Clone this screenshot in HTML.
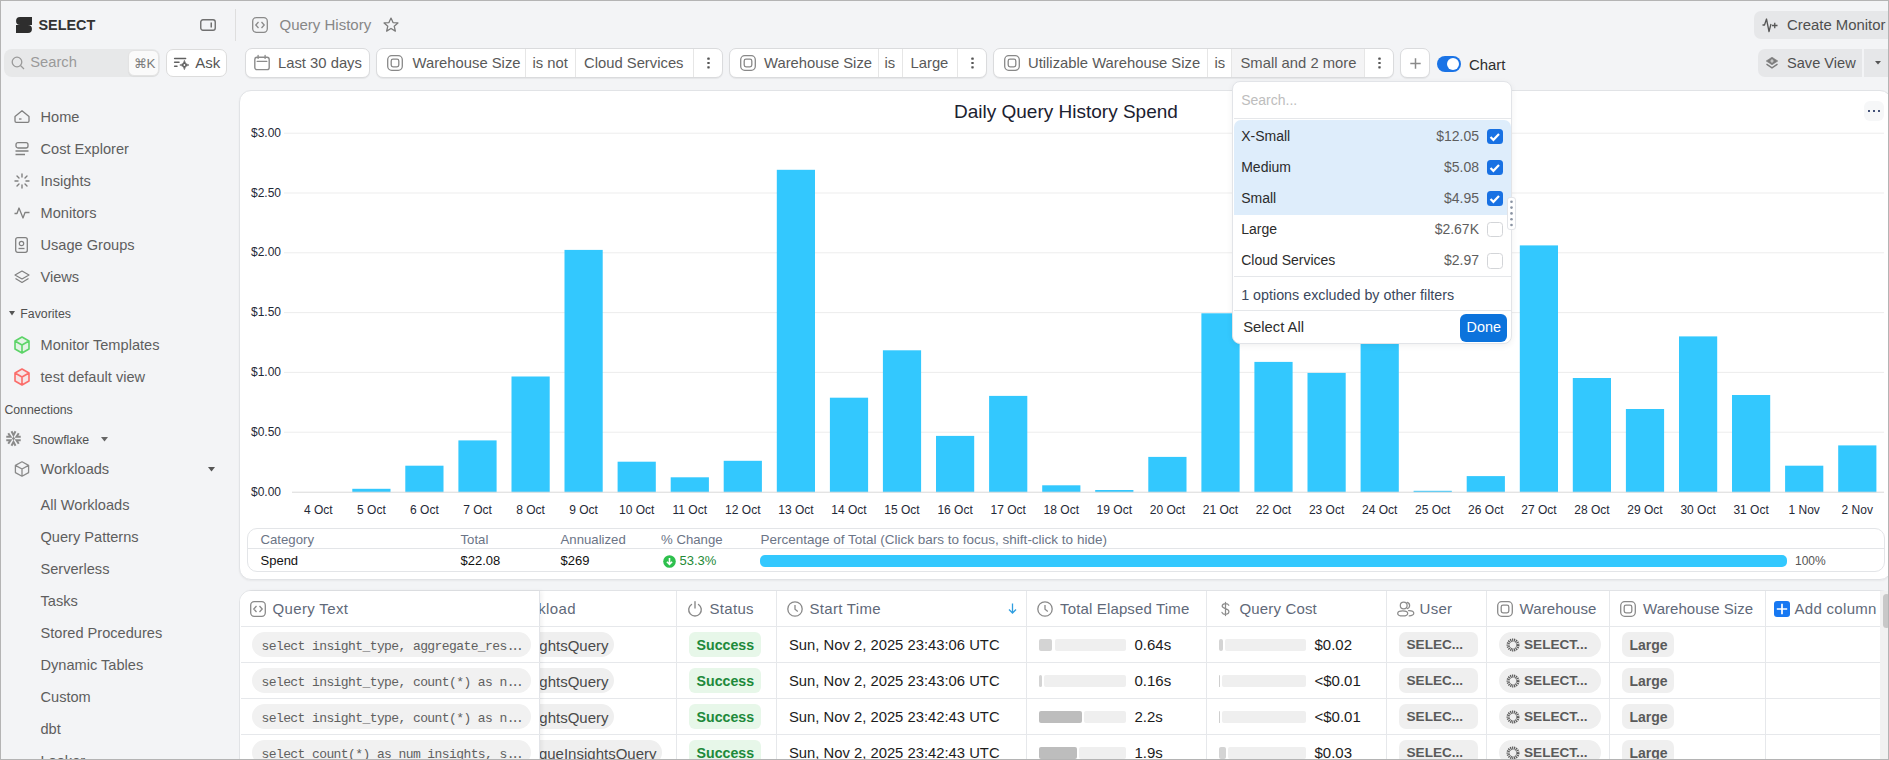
<!DOCTYPE html>
<html><head><meta charset="utf-8">
<style>
*{box-sizing:border-box;margin:0;padding:0}
html,body{width:1889px;height:760px;overflow:hidden;background:#f3f4f6;font-family:"Liberation Sans",sans-serif;color:#333}
.a{position:absolute}
.frame{position:absolute;left:0;top:0;width:1889px;height:760px;border:1px solid #b4b4b4;z-index:100;pointer-events:none}
.t{position:absolute;white-space:nowrap;line-height:1}
svg.ic{position:absolute;overflow:visible}
.side{color:#5e5e5e;font-size:14.6px}
.chip{position:absolute;top:48px;height:30px;background:#fff;border:1px solid #dadbdd;border-radius:7px;box-shadow:0 1px 1px rgba(0,0,0,0.06)}
.sep{position:absolute;top:0;bottom:0;width:1px;background:#e6e6e6}
.ct{position:absolute;top:6.7px;font-size:14.8px;color:#595959;white-space:nowrap;line-height:1}
.chart{position:absolute;left:0;top:0;z-index:3}
.card{position:absolute;background:#fff;border:1px solid #e1e3e6;border-radius:12px}
.hd{color:#5f6979;font-size:15px}
.row{position:absolute;left:240px;width:1648px;height:1px;background:#e6e8eb;z-index:6}
.col{position:absolute;width:1px;background:#e6e8eb;z-index:6}
.pill{position:absolute;height:24.5px;border-radius:7px;background:#efefef;z-index:6}
.code{position:absolute;left:252px;width:279px;height:24.5px;border-radius:13px;background:#f1f1f1;font-family:"Liberation Mono",monospace;font-size:13px;letter-spacing:-0.59px;color:#606060;padding:7.5px 0 0 9.5px;white-space:nowrap;line-height:1;z-index:8}
.wl{position:absolute;height:24.5px;border-radius:13px;background:#efefef;font-size:15px;color:#4a4a4a;white-space:nowrap;line-height:1;z-index:6;text-align:right;padding:6px 5.5px 0 0}
.succ{position:absolute;left:689px;width:72px;height:25px;border-radius:6px;background:#e7f7e9;color:#20893a;font-weight:bold;font-size:14.2px;padding:6px 0 0 7.5px;z-index:6;line-height:1}
.date{position:absolute;left:789px;font-size:14.8px;color:#1c1c1c;white-space:nowrap;line-height:1;z-index:6}
.bar{position:absolute;height:12px;border-radius:2px;z-index:6}
.val{position:absolute;font-size:15px;color:#1c1c1c;line-height:1;z-index:6;white-space:nowrap}
.usr{position:absolute;left:1399px;width:79px;height:24.5px;border-radius:7px;background:#efefef;color:#5a5a5a;font-weight:bold;font-size:13.6px;padding:6px 0 0 7.5px;z-index:6;line-height:1}
.wh{position:absolute;left:1499px;width:102px;height:24.5px;border-radius:13px;background:#efefef;color:#5a5a5a;font-weight:bold;font-size:13.6px;padding:6px 0 0 25px;z-index:6;line-height:1}
.lg{position:absolute;left:1622px;width:52px;height:24.5px;border-radius:7px;background:#efefef;color:#5a5a5a;font-weight:bold;font-size:14px;padding:6px 0 0 7.5px;z-index:6;line-height:1}
.pop{position:absolute;left:1232px;top:81px;width:280px;height:263px;background:#fff;border:1px solid #e2e4e8;border-radius:8px;z-index:20;box-shadow:0 2px 6px rgba(0,0,0,0.06)}
.pt{position:absolute;font-size:14px;color:#2b2b2b;white-space:nowrap;line-height:1}
.pv{position:absolute;right:32px;font-size:14px;color:#5e5e5e;white-space:nowrap;line-height:1;text-align:right}
.cb{position:absolute;left:253px;width:15.5px;height:15.5px;border-radius:3.5px}
.cb.on{background:#1871e3}
.cb.off{border:1px solid #d3d5d8;background:#fff}
</style></head><body>
<div class="frame"></div>

<!-- ===== SIDEBAR ===== -->
<svg class="ic" style="left:16px;top:17px" width="16" height="16" viewBox="0 0 16 16"><path d="M4 0H16V7.9H4A3.95 3.95 0 0 1 4 0Z" fill="#2e2e2e"/><path d="M0 8.1H12A3.95 3.95 0 0 1 12 16H0Z" fill="#2e2e2e"/></svg>
<div class="t" style="left:38.5px;top:17.6px;font-size:14.4px;font-weight:bold;color:#333;letter-spacing:0px">SELECT</div>
<svg class="ic" style="left:200px;top:19px" width="16" height="12" viewBox="0 0 16 12"><rect x="0.75" y="0.75" width="14.5" height="10.5" rx="2.2" fill="none" stroke="#707070" stroke-width="1.4"/><rect x="10.5" y="3.5" width="1.5" height="5" fill="#707070"/></svg>
<div class="a" style="left:235px;top:9px;width:1px;height:32px;background:#dedede"></div>

<!-- search -->
<div class="a" style="left:4px;top:49px;width:156px;height:28px;border-radius:8px;background:#e7e8e9"></div>
<svg class="ic" style="left:11px;top:56px" width="14" height="14" viewBox="0 0 14 14"><circle cx="6" cy="6" r="4.8" fill="none" stroke="#9a9a9a" stroke-width="1.3"/><path d="M9.5 9.5L13 13" stroke="#9a9a9a" stroke-width="1.3"/></svg>
<div class="t" style="left:30.3px;top:55px;font-size:14.7px;color:#9a9a9a">Search</div>
<div class="a" style="left:128px;top:50px;width:31px;height:26px;border-radius:6px;background:#fafafa;border:1px solid #e3e3e3;box-shadow:0 1px 1px rgba(0,0,0,0.05)"></div>
<div class="t" style="left:133.5px;top:56.8px;font-size:13.4px;color:#7a7a7a">&#8984;K</div>
<div class="a" style="left:166px;top:49px;width:61px;height:28px;border-radius:7px;background:#fff;border:1px solid #dcdcdc"></div>
<svg class="ic" style="left:173px;top:56px" width="17" height="15" viewBox="0 0 17 15"><path d="M1.6 2.4H12.6M1.6 6.3H6M1.6 10.2H4" stroke="#606060" stroke-width="1.5" stroke-linecap="round"/><path d="M11.4 4.3Q11.9 8.5 16 9Q11.9 9.5 11.4 13.7Q10.9 9.5 6.8 9Q10.9 8.5 11.4 4.3Z" fill="#606060" stroke="#606060" stroke-width="0.6" stroke-linejoin="round"/><circle cx="11.4" cy="9" r="0.9" fill="#fff"/></svg>
<div class="t" style="left:195.3px;top:55.1px;font-size:15px;color:#555">Ask</div>

<!-- nav -->
<svg class="ic" style="left:14px;top:110px" width="16" height="13" viewBox="0 0 16 13"><path d="M1 6.5L8 0.8L15 6.5V11A1.3 1.3 0 0 1 13.7 12.3H2.3A1.3 1.3 0 0 1 1 11Z" fill="none" stroke="#808080" stroke-width="1.3" stroke-linejoin="round"/><path d="M5 9H7.5" stroke="#808080" stroke-width="1.3"/></svg>
<div class="t side" style="left:40.5px;top:109.7px">Home</div>
<svg class="ic" style="left:15px;top:142px" width="14" height="14" viewBox="0 0 14 14"><rect x="1" y="0.7" width="12" height="5.3" rx="2" fill="none" stroke="#808080" stroke-width="1.3"/><path d="M0.5 9H13.5M0.5 12.5H10" stroke="#808080" stroke-width="1.3"/></svg>
<div class="t side" style="left:40.5px;top:141.7px">Cost Explorer</div>
<svg class="ic" style="left:14px;top:173px" width="16" height="16" viewBox="0 0 16 16"><g stroke="#808080" stroke-width="1.4" stroke-linecap="round"><path d="M8 1V4M8 12V15M1 8H4M12 8H15M3 3L5 5M11 11L13 13M13 3L11 5M5 11L3 13"/></g></svg>
<div class="t side" style="left:40.5px;top:173.7px">Insights</div>
<svg class="ic" style="left:14px;top:206px" width="16" height="14" viewBox="0 0 16 14"><path d="M0.5 7.5H3L5 2L9 12L11 6.5H15.5" fill="none" stroke="#808080" stroke-width="1.3" stroke-linejoin="round"/></svg>
<div class="t side" style="left:40.5px;top:205.7px">Monitors</div>
<svg class="ic" style="left:15px;top:237px" width="13" height="16" viewBox="0 0 13 16"><rect x="0.7" y="0.7" width="11.6" height="14.6" rx="2" fill="none" stroke="#808080" stroke-width="1.3"/><circle cx="6.5" cy="6.5" r="2.2" fill="none" stroke="#808080" stroke-width="1.2"/><path d="M3.5 11.5H9.5" stroke="#808080" stroke-width="1.3"/></svg>
<div class="t side" style="left:40.5px;top:237.7px">Usage Groups</div>
<svg class="ic" style="left:14px;top:270px" width="16" height="15" viewBox="0 0 16 15"><path d="M8 1L15 5L8 9L1 5Z" fill="none" stroke="#808080" stroke-width="1.2" stroke-linejoin="round"/><path d="M1.5 8.5L8 12.5L14.5 8.5" fill="none" stroke="#808080" stroke-width="1.2" stroke-linejoin="round"/></svg>
<div class="t side" style="left:40.5px;top:269.7px">Views</div>

<svg class="ic" style="left:9px;top:311px" width="6" height="5" viewBox="0 0 6 5"><path d="M0 0H6L3 4.5Z" fill="#555"/></svg>
<div class="t" style="left:20.3px;top:308.2px;font-size:12.3px;color:#505050">Favorites</div>
<svg class="ic" style="left:14px;top:336px" width="16" height="18" viewBox="0 0 16 18"><path d="M8 1L15 5V13L8 17L1 13V5Z" fill="#e3f3e5"/><path d="M8 1L15 5V13L8 17L1 13V5Z M1 5L8 9L15 5 M8 9V17" fill="none" stroke="#5cd468" stroke-width="1.6" stroke-linejoin="round"/></svg>
<div class="t side" style="left:40.5px;top:337.7px">Monitor Templates</div>
<svg class="ic" style="left:14px;top:368px" width="16" height="18" viewBox="0 0 16 18"><path d="M8 1L15 5V13L8 17L1 13V5Z" fill="#f6e6e7"/><path d="M8 1L15 5V13L8 17L1 13V5Z M1 5L8 9L15 5 M8 9V17" fill="none" stroke="#fb6d6a" stroke-width="1.6" stroke-linejoin="round"/></svg>
<div class="t side" style="left:40.5px;top:369.7px">test default view</div>
<div class="t" style="left:4.4px;top:404.4px;font-size:12.3px;color:#505050">Connections</div>
<svg class="ic" style="left:6px;top:431px" width="15" height="15" viewBox="0 0 15 15"><path d="M9.50 0.30L7.50 4.10L5.50 0.30M2.26 2.17L4.56 5.80L0.26 5.63M0.26 9.37L4.56 9.20L2.26 12.83M5.50 14.70L7.50 10.90L9.50 14.70M12.74 12.83L10.44 9.20L14.74 9.37M14.74 5.63L10.44 5.80L12.74 2.17" fill="none" stroke="#8a8a8a" stroke-width="2"/><rect x="6.3" y="6.3" width="2.4" height="2.4" transform="rotate(45 7.5 7.5)" fill="#8a8a8a"/></svg>
<div class="t" style="left:32.4px;top:434.2px;font-size:12.3px;color:#505050">Snowflake</div>
<svg class="ic" style="left:101px;top:437px" width="7" height="5" viewBox="0 0 7 5"><path d="M0 0H7L3.5 4.5Z" fill="#666"/></svg>
<svg class="ic" style="left:14px;top:461px" width="16" height="16" viewBox="0 0 16 16"><path d="M8 0.8L14.6 4.4V11.6L8 15.2L1.4 11.6V4.4Z M1.4 4.4L8 8L14.6 4.4 M8 8V15.2" fill="none" stroke="#8a8a8a" stroke-width="1.3" stroke-linejoin="round"/></svg>
<div class="t side" style="left:40.5px;top:461.7px">Workloads</div>
<svg class="ic" style="left:208px;top:467px" width="7" height="5" viewBox="0 0 7 5"><path d="M0 0H7L3.5 4.5Z" fill="#555"/></svg>
<div class="t side" style="left:40.5px;top:497.7px">All Workloads</div>
<div class="t side" style="left:40.5px;top:529.7px">Query Patterns</div>
<div class="t side" style="left:40.5px;top:561.7px">Serverless</div>
<div class="t side" style="left:40.5px;top:593.7px">Tasks</div>
<div class="t side" style="left:40.5px;top:625.7px">Stored Procedures</div>
<div class="t side" style="left:40.5px;top:657.7px">Dynamic Tables</div>
<div class="t side" style="left:40.5px;top:689.7px">Custom</div>
<div class="t side" style="left:40.5px;top:721.7px">dbt</div>
<div class="t side" style="left:40.5px;top:753.7px">Looker</div>

<!-- ===== HEADER ===== -->
<svg class="ic" style="left:252px;top:16.5px" width="16" height="16" viewBox="0 0 16 16"><rect x="0.7" y="0.7" width="14.6" height="14.6" rx="3.5" fill="none" stroke="#8a8a8a" stroke-width="1.3"/><path d="M6.5 5L3.8 8L6.5 11M9.5 5L12.2 8L9.5 11" fill="none" stroke="#8a8a8a" stroke-width="1.3"/></svg>
<div class="t" style="left:279.5px;top:17px;font-size:15px;color:#878787">Query History</div>
<svg class="ic" style="left:382.5px;top:17px" width="16" height="16" viewBox="0 0 15 15"><path d="M7.5 1L9.4 5.2L14 5.6L10.5 8.6L11.6 13.2L7.5 10.8L3.4 13.2L4.5 8.6L1 5.6L5.6 5.2Z" fill="none" stroke="#7a7a7a" stroke-width="1.2" stroke-linejoin="round"/></svg>

<div class="a" style="left:1754px;top:11px;width:150px;height:28px;border-radius:7px;background:#e6e7e9"></div>
<svg class="ic" style="left:1762px;top:18px" width="16" height="15" viewBox="0 0 16 15"><path d="M0.5 7H2.5L4.5 1L7 13.5L9 6" fill="none" stroke="#555" stroke-width="1.3" stroke-linejoin="round"/><path d="M10 7.5H15.5M12.75 4.75V10.25" stroke="#555" stroke-width="1.3"/></svg>
<div class="t" style="left:1787px;top:18.4px;font-size:14.9px;color:#4f4f4f">Create Monitor</div>

<div class="a" style="left:1758px;top:49px;width:104px;height:28px;border-radius:7px 0 0 7px;background:#e6e7e9"></div>
<div class="a" style="left:1864px;top:49px;width:40px;height:28px;background:#e6e7e9"></div>
<svg class="ic" style="left:1766px;top:57px" width="12" height="12" viewBox="0 0 12 12"><path d="M6 0.2L11.8 4L6 7.8L0.2 4Z" fill="#7c7c7c" stroke="#7c7c7c" stroke-width="0.6" stroke-linejoin="round"/><path d="M0.5 7.2L6 10.8L11.5 7.2" fill="none" stroke="#7c7c7c" stroke-width="1.4"/><path d="M6 2.3V5.7M4.3 4H7.7" stroke="#d8d8d8" stroke-width="1.2"/></svg>
<div class="t" style="left:1787px;top:56.3px;font-size:14.6px;color:#4f4f4f">Save View</div>
<svg class="ic" style="left:1875px;top:61px" width="6" height="4" viewBox="0 0 6 4"><path d="M0 0H6L3 3.6Z" fill="#555"/></svg>

<!-- ===== FILTER ROW ===== -->
<div class="chip" style="left:245px;width:125px">
  <svg class="ic" style="left:8px;top:6px" width="16" height="16" viewBox="0 0 16 16"><rect x="0.8" y="2.2" width="14.4" height="12.4" rx="2.2" fill="none" stroke="#8c8c8c" stroke-width="1.4"/><path d="M3.2 6.4H12.8M4.1 0.3V3.4M11.1 0.3V3.4" stroke="#8c8c8c" stroke-width="1.3" stroke-linecap="round"/></svg>
  <div class="ct" style="left:32px">Last 30 days</div>
</div>
<div class="chip" style="left:376px;width:347px">
  <svg class="ic" style="left:10px;top:6px" width="16" height="16" viewBox="0 0 16 16"><rect x="0.7" y="0.7" width="14.6" height="14.6" rx="4" fill="none" stroke="#888" stroke-width="1.3"/><rect x="4.2" y="4.2" width="7.6" height="7.6" rx="1.8" fill="none" stroke="#888" stroke-width="1.3"/></svg>
  <div class="ct" style="left:35.5px">Warehouse Size</div>
  <div class="sep" style="left:148px"></div>
  <div class="ct" style="left:155.5px">is not</div>
  <div class="sep" style="left:198px"></div>
  <div class="ct" style="left:207px">Cloud Services</div>
  <div class="sep" style="left:316px"></div>
  <svg class="ic" style="left:329.5px;top:8px" width="3" height="12" viewBox="0 0 3 12"><rect x="0.3" y="0.6" width="2.4" height="2.2" rx="0.6" fill="#555"/><rect x="0.3" y="4.9" width="2.4" height="2.2" rx="0.6" fill="#555"/><rect x="0.3" y="9.2" width="2.4" height="2.2" rx="0.6" fill="#555"/></svg>
</div>
<div class="chip" style="left:729px;width:258px">
  <svg class="ic" style="left:10px;top:6px" width="16" height="16" viewBox="0 0 16 16"><rect x="0.7" y="0.7" width="14.6" height="14.6" rx="4" fill="none" stroke="#888" stroke-width="1.3"/><rect x="4.2" y="4.2" width="7.6" height="7.6" rx="1.8" fill="none" stroke="#888" stroke-width="1.3"/></svg>
  <div class="ct" style="left:34px">Warehouse Size</div>
  <div class="sep" style="left:148px"></div>
  <div class="ct" style="left:154.5px">is</div>
  <div class="sep" style="left:172px"></div>
  <div class="ct" style="left:180.5px">Large</div>
  <div class="sep" style="left:227px"></div>
  <svg class="ic" style="left:240.5px;top:8px" width="3" height="12" viewBox="0 0 3 12"><rect x="0.3" y="0.6" width="2.4" height="2.2" rx="0.6" fill="#555"/><rect x="0.3" y="4.9" width="2.4" height="2.2" rx="0.6" fill="#555"/><rect x="0.3" y="9.2" width="2.4" height="2.2" rx="0.6" fill="#555"/></svg>
</div>
<div class="chip" style="left:993px;width:401px;overflow:hidden">
  <svg class="ic" style="left:10px;top:6px" width="16" height="16" viewBox="0 0 16 16"><rect x="0.7" y="0.7" width="14.6" height="14.6" rx="4" fill="none" stroke="#888" stroke-width="1.3"/><rect x="4.2" y="4.2" width="7.6" height="7.6" rx="1.8" fill="none" stroke="#888" stroke-width="1.3"/></svg>
  <div class="ct" style="left:34px">Utilizable Warehouse Size</div>
  <div class="sep" style="left:213px"></div>
  <div class="ct" style="left:220.5px">is</div>
  <div class="a" style="left:237px;top:0;width:134px;height:28px;background:#f4f4f5;border-left:1px solid #e6e6e6;border-right:1px solid #e6e6e6"></div>
  <div class="ct" style="left:246.5px">Small and 2 more</div>
  <svg class="ic" style="left:383.5px;top:8px" width="3" height="12" viewBox="0 0 3 12"><rect x="0.3" y="0.6" width="2.4" height="2.2" rx="0.6" fill="#555"/><rect x="0.3" y="4.9" width="2.4" height="2.2" rx="0.6" fill="#555"/><rect x="0.3" y="9.2" width="2.4" height="2.2" rx="0.6" fill="#555"/></svg>
</div>
<div class="chip" style="left:1400px;width:30px">
  <svg class="ic" style="left:8.8px;top:8.5px" width="11" height="11" viewBox="0 0 11 11"><path d="M5.5 0.3V10.7M0.3 5.5H10.7" stroke="#8a8a8a" stroke-width="1.5"/></svg>
</div>
<div class="a" style="left:1437px;top:56px;width:24px;height:16px;border-radius:8px;background:#1a73e6"></div>
<div class="a" style="left:1447px;top:58px;width:12px;height:12px;border-radius:6px;background:#fff"></div>
<div class="t" style="left:1469px;top:57.6px;font-size:14.9px;color:#2e2e2e">Chart</div>

<!-- ===== CHART CARD ===== -->
<div class="card" style="left:239px;top:90px;width:1653px;height:490px;z-index:1;box-shadow:0 1px 2px rgba(0,0,0,0.05)"></div>
<div class="t" style="left:954px;top:102.2px;font-size:19px;color:#1b2130;z-index:4">Daily Query History Spend</div>
<div class="a" style="left:1864px;top:101px;width:20px;height:20px;border-radius:6px;background:#f6f7f8;z-index:4"></div>
<div class="a" style="left:1867.8px;top:109.6px;width:2.6px;height:2.6px;background:#45537a;z-index:5"></div>
<div class="a" style="left:1872.8px;top:109.6px;width:2.6px;height:2.6px;background:#45537a;z-index:5"></div>
<div class="a" style="left:1877.8px;top:109.6px;width:2.6px;height:2.6px;background:#45537a;z-index:5"></div>
<svg class="chart" width="1889" height="760" viewBox="0 0 1889 760" font-family="Liberation Sans, sans-serif" font-size="12" fill="#1f2937"><rect x="284" y="132.7" width="1600" height="1" fill="#ededed"/><text x="281" y="136.7" text-anchor="end">$3.00</text><rect x="284" y="192.5" width="1600" height="1" fill="#ededed"/><text x="281" y="196.5" text-anchor="end">$2.50</text><rect x="284" y="252.3" width="1600" height="1" fill="#ededed"/><text x="281" y="256.3" text-anchor="end">$2.00</text><rect x="284" y="312.1" width="1600" height="1" fill="#ededed"/><text x="281" y="316.1" text-anchor="end">$1.50</text><rect x="284" y="371.9" width="1600" height="1" fill="#ededed"/><text x="281" y="375.9" text-anchor="end">$1.00</text><rect x="284" y="431.7" width="1600" height="1" fill="#ededed"/><text x="281" y="435.7" text-anchor="end">$0.50</text><text x="281" y="495.7" text-anchor="end">$0.00</text><text x="318.3" y="513.5" text-anchor="middle">4 Oct</text><rect x="352.3" y="488.8" width="38.2" height="3.4" fill="#33c8fe"/><text x="371.4" y="513.5" text-anchor="middle">5 Oct</text><rect x="405.3" y="465.7" width="38.2" height="26.5" fill="#33c8fe"/><text x="424.4" y="513.5" text-anchor="middle">6 Oct</text><rect x="458.4" y="440.4" width="38.2" height="51.8" fill="#33c8fe"/><text x="477.5" y="513.5" text-anchor="middle">7 Oct</text><rect x="511.5" y="376.5" width="38.2" height="115.7" fill="#33c8fe"/><text x="530.6" y="513.5" text-anchor="middle">8 Oct</text><rect x="564.5" y="249.9" width="38.2" height="242.3" fill="#33c8fe"/><text x="583.6" y="513.5" text-anchor="middle">9 Oct</text><rect x="617.6" y="461.7" width="38.2" height="30.5" fill="#33c8fe"/><text x="636.7" y="513.5" text-anchor="middle">10 Oct</text><rect x="670.7" y="477.3" width="38.2" height="14.9" fill="#33c8fe"/><text x="689.8" y="513.5" text-anchor="middle">11 Oct</text><rect x="723.7" y="460.8" width="38.2" height="31.4" fill="#33c8fe"/><text x="742.8" y="513.5" text-anchor="middle">12 Oct</text><rect x="776.8" y="169.8" width="38.2" height="322.4" fill="#33c8fe"/><text x="795.9" y="513.5" text-anchor="middle">13 Oct</text><rect x="829.9" y="397.7" width="38.2" height="94.5" fill="#33c8fe"/><text x="849.0" y="513.5" text-anchor="middle">14 Oct</text><rect x="882.9" y="350.3" width="38.2" height="141.9" fill="#33c8fe"/><text x="902.0" y="513.5" text-anchor="middle">15 Oct</text><rect x="936.0" y="435.9" width="38.2" height="56.3" fill="#33c8fe"/><text x="955.1" y="513.5" text-anchor="middle">16 Oct</text><rect x="989.1" y="395.9" width="38.2" height="96.3" fill="#33c8fe"/><text x="1008.2" y="513.5" text-anchor="middle">17 Oct</text><rect x="1042.2" y="485.3" width="38.2" height="6.9" fill="#33c8fe"/><text x="1061.3" y="513.5" text-anchor="middle">18 Oct</text><rect x="1095.2" y="490.0" width="38.2" height="2.2" fill="#33c8fe"/><text x="1114.3" y="513.5" text-anchor="middle">19 Oct</text><rect x="1148.3" y="456.9" width="38.2" height="35.3" fill="#33c8fe"/><text x="1167.4" y="513.5" text-anchor="middle">20 Oct</text><rect x="1201.4" y="313.3" width="38.2" height="178.9" fill="#33c8fe"/><text x="1220.5" y="513.5" text-anchor="middle">21 Oct</text><rect x="1254.4" y="361.9" width="38.2" height="130.3" fill="#33c8fe"/><text x="1273.5" y="513.5" text-anchor="middle">22 Oct</text><rect x="1307.5" y="372.9" width="38.2" height="119.3" fill="#33c8fe"/><text x="1326.6" y="513.5" text-anchor="middle">23 Oct</text><rect x="1360.6" y="300.0" width="38.2" height="192.2" fill="#33c8fe"/><text x="1379.7" y="513.5" text-anchor="middle">24 Oct</text><rect x="1413.6" y="490.8" width="38.2" height="1.4" fill="#33c8fe"/><text x="1432.7" y="513.5" text-anchor="middle">25 Oct</text><rect x="1466.7" y="476.1" width="38.2" height="16.1" fill="#33c8fe"/><text x="1485.8" y="513.5" text-anchor="middle">26 Oct</text><rect x="1519.8" y="245.4" width="38.2" height="246.8" fill="#33c8fe"/><text x="1538.9" y="513.5" text-anchor="middle">27 Oct</text><rect x="1572.8" y="378.0" width="38.2" height="114.2" fill="#33c8fe"/><text x="1591.9" y="513.5" text-anchor="middle">28 Oct</text><rect x="1625.9" y="409.0" width="38.2" height="83.2" fill="#33c8fe"/><text x="1645.0" y="513.5" text-anchor="middle">29 Oct</text><rect x="1679.0" y="336.4" width="38.2" height="155.8" fill="#33c8fe"/><text x="1698.1" y="513.5" text-anchor="middle">30 Oct</text><rect x="1732.0" y="395.0" width="38.2" height="97.2" fill="#33c8fe"/><text x="1751.1" y="513.5" text-anchor="middle">31 Oct</text><rect x="1785.1" y="465.7" width="38.2" height="26.5" fill="#33c8fe"/><text x="1804.2" y="513.5" text-anchor="middle">1 Nov</text><rect x="1838.2" y="445.4" width="38.2" height="46.8" fill="#33c8fe"/><text x="1857.3" y="513.5" text-anchor="middle">2 Nov</text><rect x="292" y="491.7" width="1592" height="1" fill="#d9d9d9"/></svg>

<!-- summary table -->
<div class="a" style="left:247px;top:528px;width:1638px;height:44px;border:1px solid #e3e5e8;border-radius:10px;z-index:4"></div>
<div class="a" style="left:248px;top:548px;width:1636px;height:1px;background:#e3e5e8;z-index:4"></div>
<div class="t" style="left:260.5px;top:532.8px;font-size:13.2px;color:#6b7486;z-index:4">Category</div>
<div class="t" style="left:460.5px;top:532.8px;font-size:13.2px;color:#6b7486;z-index:4">Total</div>
<div class="t" style="left:560.5px;top:532.8px;font-size:13.2px;color:#6b7486;z-index:4">Annualized</div>
<div class="t" style="left:661px;top:532.8px;font-size:13.2px;color:#6b7486;z-index:4">% Change</div>
<div class="t" style="left:760.5px;top:532.6px;font-size:13.5px;color:#6b7486;z-index:4">Percentage of Total (Click bars to focus, shift-click to hide)</div>
<div class="t" style="left:260.5px;top:553.7px;font-size:13px;color:#111;z-index:4">Spend</div>
<div class="t" style="left:460.5px;top:553.7px;font-size:13px;color:#111;z-index:4">$22.08</div>
<div class="t" style="left:560.5px;top:553.7px;font-size:13px;color:#111;z-index:4">$269</div>
<svg class="ic" style="left:662.5px;top:554.5px;z-index:4" width="13" height="13" viewBox="0 0 13 13"><circle cx="6.5" cy="6.5" r="6.3" fill="#2ec04d"/><path d="M6.5 3V9.2M3.9 6.8L6.5 9.4L9.1 6.8" fill="none" stroke="#fff" stroke-width="1.6"/></svg>
<div class="t" style="left:679.5px;top:553.7px;font-size:13px;color:#248a36;z-index:4">53.3%</div>
<div class="a" style="left:760px;top:555px;width:1027px;height:12px;border-radius:5px;background:#33c8fe;z-index:4"></div>
<div class="t" style="left:1795px;top:554.5px;font-size:12px;color:#555;z-index:4">100%</div>

<!-- ===== POPUP ===== -->
<div class="pop"><div class="a" style="left:1px;top:1px;width:277px;height:261px">
  <div class="pt" style="left:7.2px;top:9.8px;color:#bdbdbd">Search...</div>
  <div class="a" style="left:0;top:35px;width:277px;height:1px;background:#e5e7ea"></div>
  <div class="a" style="left:0;top:37px;width:277px;height:94.5px;background:#deedfb;border-radius:7px 7px 0 0"></div>
  <div class="pt" style="left:7.2px;top:45.8px">X-Small</div>
  <div class="pv" style="top:45.8px">$12.05</div>
  <div class="cb on" style="top:45.5px"><svg width="15.5" height="15.5" viewBox="0 0 15 15"><path d="M3.4 7.8L6.2 10.5L11.6 4.8" fill="none" stroke="#fff" stroke-width="2.1"/></svg></div>
  <div class="pt" style="left:7.2px;top:76.8px">Medium</div>
  <div class="pv" style="top:76.8px">$5.08</div>
  <div class="cb on" style="top:76.5px"><svg width="15.5" height="15.5" viewBox="0 0 15 15"><path d="M3.4 7.8L6.2 10.5L11.6 4.8" fill="none" stroke="#fff" stroke-width="2.1"/></svg></div>
  <div class="pt" style="left:7.2px;top:107.6px">Small</div>
  <div class="pv" style="top:107.6px">$4.95</div>
  <div class="cb on" style="top:107.5px"><svg width="15.5" height="15.5" viewBox="0 0 15 15"><path d="M3.4 7.8L6.2 10.5L11.6 4.8" fill="none" stroke="#fff" stroke-width="2.1"/></svg></div>
  <div class="pt" style="left:7.2px;top:139.0px">Large</div>
  <div class="pv" style="top:139.0px">$2.67K</div>
  <div class="cb off" style="top:138.5px"></div>
  <div class="pt" style="left:7.2px;top:170.0px">Cloud Services</div>
  <div class="pv" style="top:170.0px">$2.97</div>
  <div class="cb off" style="top:170.0px"></div>
  <div class="a" style="left:0;top:193px;width:277px;height:1px;background:#e5e7ea"></div>
  <div class="pt" style="left:7.2px;top:205.4px;color:#3a475c;font-size:14.3px">1 options excluded by other filters</div>
  <div class="a" style="left:0;top:227px;width:277px;height:1px;background:#e5e7ea"></div>
  <div class="pt" style="left:9.2px;top:237.1px;font-size:14.8px;color:#2e2e2e">Select All</div>
  <div class="a" style="left:226px;top:230.5px;width:47px;height:28px;border-radius:6px;background:#0c73dc"></div>
  <div class="pt" style="left:232.5px;top:237px;color:#fff;font-size:14.4px">Done</div>
</div></div>
<div class="a" style="left:1507px;top:197px;width:9px;height:33px;border-radius:3px;background:#fff;border:1px solid #e2e4e8;z-index:21"></div>
<svg class="ic" style="left:1510px;top:200px;z-index:22" width="3" height="27" viewBox="0 0 3 27"><g fill="#8a93a3"><circle cx="1.5" cy="1.8" r="1.3"/><circle cx="1.5" cy="7.6" r="1.3"/><circle cx="1.5" cy="13.4" r="1.3"/><circle cx="1.5" cy="19.2" r="1.3"/><circle cx="1.5" cy="25" r="1.3"/></g></svg>

<!-- ===== TABLE CARD ===== -->
<div class="card" style="left:239px;top:590px;width:1653px;height:300px;z-index:5"></div>
<div class="row" style="top:626px"></div>
<div class="row" style="top:662px"></div>
<div class="row" style="top:698px"></div>
<div class="row" style="top:734px"></div>
<div class="col" style="left:676px;top:591px;height:170px"></div>
<div class="col" style="left:776px;top:591px;height:170px"></div>
<div class="col" style="left:1026px;top:591px;height:170px"></div>
<div class="col" style="left:1206px;top:591px;height:170px"></div>
<div class="col" style="left:1386px;top:591px;height:170px"></div>
<div class="col" style="left:1486px;top:591px;height:170px"></div>
<div class="col" style="left:1609px;top:591px;height:170px"></div>
<div class="col" style="left:1765px;top:591px;height:170px"></div>

<!-- frozen column -->
<div class="a" style="left:240px;top:591px;width:299px;height:170px;background:#fff;border-radius:11px 0 0 0;z-index:7;box-shadow:3px 0 4px rgba(0,0,0,0.06)"></div>
<div class="a" style="left:539px;top:591px;width:1px;height:170px;background:#e2e4e8;z-index:8"></div>
<div class="a" style="left:240.5px;top:626px;width:299px;height:1px;background:#e6e8eb;z-index:8"></div>
<div class="a" style="left:240.5px;top:662px;width:299px;height:1px;background:#e6e8eb;z-index:8"></div>
<div class="a" style="left:240.5px;top:698px;width:299px;height:1px;background:#e6e8eb;z-index:8"></div>
<div class="a" style="left:240.5px;top:734px;width:299px;height:1px;background:#e6e8eb;z-index:8"></div>
<svg class="ic" style="left:250px;top:600.6px;z-index:8" width="16" height="16" viewBox="0 0 16 16"><rect x="0.7" y="0.7" width="14.6" height="14.6" rx="3.5" fill="none" stroke="#8a8a8a" stroke-width="1.3"/><path d="M6.5 5L3.8 8L6.5 11M9.5 5L12.2 8L9.5 11" fill="none" stroke="#8a8a8a" stroke-width="1.3"/></svg>
<div class="t hd" style="left:272.5px;top:600.6px;z-index:8;letter-spacing:0.35px">Query Text</div>
<div class="code" style="top:632px">select insight_type, aggregate_res<span style="letter-spacing:-3.2px">...</span></div>
<div class="code" style="top:668px">select insight_type, count(*) as n<span style="letter-spacing:-3.2px">...</span></div>
<div class="code" style="top:704px">select insight_type, count(*) as n<span style="letter-spacing:-3.2px">...</span></div>
<div class="code" style="top:740px">select count(*) as num_insights, s<span style="letter-spacing:-3.2px">...</span></div>

<!-- workload col (partially hidden) -->
<div class="t hd" style="left:510px;top:600.6px;z-index:6;letter-spacing:0.35px">Workload</div>

<div class="wl" style="left:380px;top:632px;width:234px">InsightsQuery</div>
<div class="wl" style="left:380px;top:668px;width:234px">InsightsQuery</div>
<div class="wl" style="left:380px;top:704px;width:234px">InsightsQuery</div>
<div class="wl" style="left:380px;top:740px;width:282px">UniqueInsightsQuery</div>

<!-- status -->
<svg class="ic" style="left:687px;top:601px;z-index:6" width="16" height="16" viewBox="0 0 16 16"><path d="M4.5 3.5A6.3 6.3 0 1 0 11.5 3.5" fill="none" stroke="#8a8a8a" stroke-width="1.4" stroke-linecap="round"/><path d="M8 0.8V7" stroke="#8a8a8a" stroke-width="1.4" stroke-linecap="round"/></svg>
<div class="t hd" style="left:709.5px;top:600.6px;z-index:6;letter-spacing:0.3px">Status</div>
<div class="succ" style="top:632px">Success</div>
<div class="succ" style="top:668px">Success</div>
<div class="succ" style="top:704px">Success</div>
<div class="succ" style="top:740px">Success</div>

<!-- start time -->
<svg class="ic" style="left:787px;top:601px;z-index:6" width="16" height="16" viewBox="0 0 16 16"><circle cx="8" cy="8" r="7.2" fill="none" stroke="#8a8a8a" stroke-width="1.3"/><path d="M8 4V8.3L10.8 10.5" fill="none" stroke="#8a8a8a" stroke-width="1.3"/></svg>
<div class="t hd" style="left:809.5px;top:600.6px;z-index:6;letter-spacing:0.3px">Start Time</div>
<svg class="ic" style="left:1008px;top:603px;z-index:6" width="9" height="11" viewBox="0 0 9 11"><path d="M4.5 0.5V10M1 6.5L4.5 10L8 6.5" fill="none" stroke="#2f9ee0" stroke-width="1.3"/></svg>
<div class="date" style="top:637.8px">Sun, Nov 2, 2025 23:43:06 UTC</div>
<div class="date" style="top:673.8px">Sun, Nov 2, 2025 23:43:06 UTC</div>
<div class="date" style="top:709.8px">Sun, Nov 2, 2025 23:42:43 UTC</div>
<div class="date" style="top:745.8px">Sun, Nov 2, 2025 23:42:43 UTC</div>

<!-- elapsed -->
<svg class="ic" style="left:1037px;top:601px;z-index:6" width="16" height="16" viewBox="0 0 16 16"><circle cx="8" cy="8" r="7.2" fill="none" stroke="#8a8a8a" stroke-width="1.3"/><path d="M8 4V8.3L10.8 10.5" fill="none" stroke="#8a8a8a" stroke-width="1.3"/></svg>
<div class="t hd" style="left:1060px;top:600.6px;z-index:6;letter-spacing:0.15px">Total Elapsed Time</div>
<div class="bar" style="left:1039px;top:639px;width:13px;background:#d4d4d4"></div><div class="bar" style="left:1054.5px;top:639px;width:71.5px;background:#efefef"></div>
<div class="bar" style="left:1039px;top:675px;width:3px;background:#d4d4d4"></div><div class="bar" style="left:1044px;top:675px;width:82px;background:#efefef"></div>
<div class="bar" style="left:1039px;top:711px;width:43px;background:#bdbdbd"></div><div class="bar" style="left:1084px;top:711px;width:42px;background:#efefef"></div>
<div class="bar" style="left:1039px;top:747px;width:38px;background:#bdbdbd"></div><div class="bar" style="left:1079px;top:747px;width:47px;background:#efefef"></div>
<div class="val" style="left:1134.5px;top:637.0px">0.64s</div>
<div class="val" style="left:1134.5px;top:673.0px">0.16s</div>
<div class="val" style="left:1134.5px;top:709.0px">2.2s</div>
<div class="val" style="left:1134.5px;top:745.0px">1.9s</div>

<!-- cost -->
<svg class="ic" style="left:1220.5px;top:602px;z-index:6" width="9" height="14" viewBox="0 0 9 14"><path d="M4.5 0.4V13.6M7.8 3.3C7.3 2.3 6.2 1.7 4.5 1.7C2.5 1.7 1.2 2.7 1.2 4.1C1.2 7.3 7.9 6 7.9 9.6C7.9 11.2 6.5 12.3 4.5 12.3C2.7 12.3 1.5 11.6 1 10.4" fill="none" stroke="#8c8c8c" stroke-width="1.25" stroke-linecap="round"/></svg>
<div class="t hd" style="left:1239.5px;top:600.6px;z-index:6;letter-spacing:0.15px">Query Cost</div>
<div class="bar" style="left:1218.5px;top:639px;width:4.5px;background:#d4d4d4"></div><div class="bar" style="left:1224.5px;top:639px;width:81.5px;background:#efefef"></div>
<div class="bar" style="left:1218.8px;top:675px;width:1.2px;background:#cfcfcf"></div><div class="bar" style="left:1221.5px;top:675px;width:84.5px;background:#efefef"></div>
<div class="bar" style="left:1218.8px;top:711px;width:1.2px;background:#cfcfcf"></div><div class="bar" style="left:1221.5px;top:711px;width:84.5px;background:#efefef"></div>
<div class="bar" style="left:1218.5px;top:747px;width:7px;background:#d4d4d4"></div><div class="bar" style="left:1227.5px;top:747px;width:78.5px;background:#efefef"></div>
<div class="val" style="left:1314.5px;top:637.0px">$0.02</div>
<div class="val" style="left:1314.5px;top:673.0px">&lt;$0.01</div>
<div class="val" style="left:1314.5px;top:709.0px">&lt;$0.01</div>
<div class="val" style="left:1314.5px;top:745.0px">$0.03</div>

<!-- user -->
<svg class="ic" style="left:1397px;top:601px;z-index:6" width="16" height="16" viewBox="0 0 16 16"><circle cx="6.7" cy="4.4" r="3.4" fill="none" stroke="#8c8c8c" stroke-width="1.25"/><ellipse cx="5.7" cy="12.4" rx="5" ry="2.5" fill="none" stroke="#8c8c8c" stroke-width="1.25"/><path d="M10.2 1.3A3.3 3.3 0 0 1 10.4 7.6M11.6 9.6A4.6 2.5 0 0 1 12.2 14.9" fill="none" stroke="#8c8c8c" stroke-width="1.25" stroke-linecap="round"/></svg>
<div class="t hd" style="left:1419.5px;top:600.6px;z-index:6;letter-spacing:0.3px">User</div>
<div class="usr" style="top:632px">SELEC...</div>
<div class="usr" style="top:668px">SELEC...</div>
<div class="usr" style="top:704px">SELEC...</div>
<div class="usr" style="top:740px">SELEC...</div>

<!-- warehouse -->
<svg class="ic" style="left:1497px;top:601px;z-index:6" width="16" height="16" viewBox="0 0 16 16"><rect x="0.7" y="0.7" width="14.6" height="14.6" rx="4" fill="none" stroke="#8a8a8a" stroke-width="1.3"/><rect x="4.2" y="4.2" width="7.6" height="7.6" rx="1.8" fill="none" stroke="#8a8a8a" stroke-width="1.3"/></svg>
<div class="t hd" style="left:1519.5px;top:600.6px;z-index:6;letter-spacing:0.1px">Warehouse</div>
<div class="wh" style="top:632px">SELECT...</div>
<div class="wh" style="top:668px">SELECT...</div>
<div class="wh" style="top:704px">SELECT...</div>
<div class="wh" style="top:740px">SELECT...</div>
<svg class="ic" style="left:1505.5px;top:637.5px;z-index:7" width="14" height="14" viewBox="0 0 14 14"><circle cx="7" cy="7" r="4.9" fill="none" stroke="#5c5c5c" stroke-width="3.2" stroke-dasharray="1.1 0.7"/></svg>
<svg class="ic" style="left:1505.5px;top:673.5px;z-index:7" width="14" height="14" viewBox="0 0 14 14"><circle cx="7" cy="7" r="4.9" fill="none" stroke="#5c5c5c" stroke-width="3.2" stroke-dasharray="1.1 0.7"/></svg>
<svg class="ic" style="left:1505.5px;top:709.5px;z-index:7" width="14" height="14" viewBox="0 0 14 14"><circle cx="7" cy="7" r="4.9" fill="none" stroke="#5c5c5c" stroke-width="3.2" stroke-dasharray="1.1 0.7"/></svg>
<svg class="ic" style="left:1505.5px;top:745.5px;z-index:7" width="14" height="14" viewBox="0 0 14 14"><circle cx="7" cy="7" r="4.9" fill="none" stroke="#5c5c5c" stroke-width="3.2" stroke-dasharray="1.1 0.7"/></svg>

<!-- warehouse size -->
<svg class="ic" style="left:1620px;top:601px;z-index:6" width="16" height="16" viewBox="0 0 16 16"><rect x="0.7" y="0.7" width="14.6" height="14.6" rx="4" fill="none" stroke="#8a8a8a" stroke-width="1.3"/><rect x="4.2" y="4.2" width="7.6" height="7.6" rx="1.8" fill="none" stroke="#8a8a8a" stroke-width="1.3"/></svg>
<div class="t hd" style="left:1643px;top:600.6px;z-index:6;letter-spacing:0.05px">Warehouse Size</div>
<div class="lg" style="top:632px">Large</div>
<div class="lg" style="top:668px">Large</div>
<div class="lg" style="top:704px">Large</div>
<div class="lg" style="top:740px">Large</div>

<!-- add column -->
<div class="a" style="left:1774px;top:601px;width:16px;height:16px;border-radius:3px;background:#1778f2;z-index:6"></div>
<svg class="ic" style="left:1774px;top:601px;z-index:7" width="16" height="16" viewBox="0 0 16 16"><path d="M8 2.8V13.2M2.8 8H13.2" stroke="#fff" stroke-width="1.7"/></svg>
<div class="t hd" style="left:1794.5px;top:600.6px;z-index:6;letter-spacing:0.3px">Add column</div>

<!-- scrollbar -->
<div class="a" style="left:1880px;top:591px;width:9px;height:170px;background:#f1f1f1;z-index:9"></div>
<div class="a" style="left:1883px;top:594px;width:7px;height:34px;border-radius:3.5px;background:#c8c8c8;z-index:10"></div>

</body></html>
